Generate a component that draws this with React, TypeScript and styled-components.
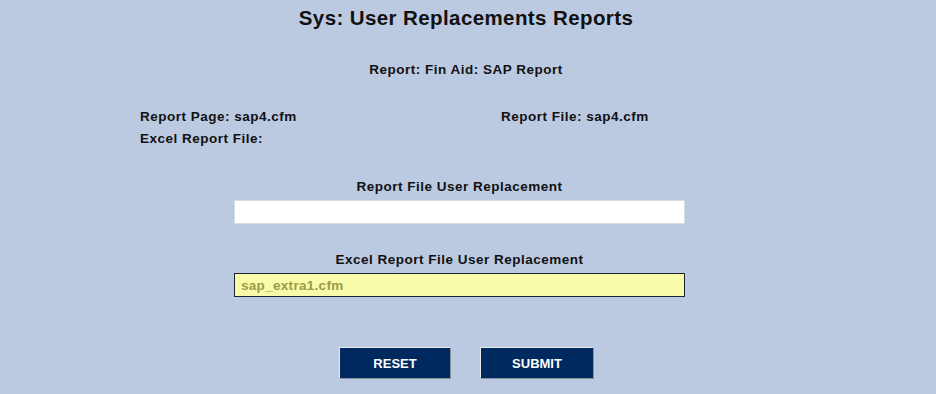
import React from 'react';
import styled, { createGlobalStyle } from 'styled-components';

const GlobalStyle = createGlobalStyle`
  html, body {
    margin: 0;
    padding: 0;
    background: #bccae1;
  }
  body {
    font-family: "Liberation Sans", Arial, sans-serif;
    color: #111;
  }
`;

const Page = styled.div`
  width: 936px;
  height: 394px;
  background: #bccae1;
  display: flex;
  flex-direction: column;
  align-items: flex-start;
`;

const Section = styled.div<{ w: number }>`
  width: ${props => props.w}px;
  display: flex;
  flex-direction: column;
  align-items: center;
`;

const Title = styled.h1`
  margin: 6px 0 0;
  font-size: 20.5px;
  letter-spacing: 0.4px;
  line-height: 24px;
  font-weight: bold;
  text-align: center;
`;

const Label = styled.div<{ top: number }>`
  margin-top: ${props => props.top}px;
  font-size: 13.5px;
  letter-spacing: 0.5px;
  line-height: 16px;
  font-weight: bold;
  text-align: center;
`;

const InfoGrid = styled.div`
  margin: 31px 0 0 140px;
  display: grid;
  grid-template-columns: 361px auto;
  row-gap: 6px;
  font-size: 13.5px;
  letter-spacing: 0.5px;
  line-height: 16px;
  font-weight: bold;
`;

const Field = styled.input<{ filled?: boolean }>`
  box-sizing: border-box;
  width: 451px;
  height: 24px;
  margin-top: 5px;
  padding: 0 6px;
  font-family: "Liberation Sans", Arial, sans-serif;
  font-size: 13.5px;
  letter-spacing: 0.3px;
  font-weight: bold;
  color: #9c9c46;
  background: ${props => (props.filled ? '#f8fba8' : '#ffffff')};
  border: 1px solid ${props => (props.filled ? '#1c2236' : '#d8dce4')};
  outline: none;
`;

const Buttons = styled.div`
  margin-top: 50px;
  display: flex;
  gap: 29px;
`;

const Button = styled.button<{ w: number }>`
  box-sizing: border-box;
  width: ${props => props.w}px;
  height: 32px;
  background: #002a5f;
  color: #ffffff;
  font-family: "Liberation Sans", Arial, sans-serif;
  font-size: 13px;
  font-weight: bold;
  border: 1px solid;
  border-color: #e4e8ee #8b93a3 #8b93a3 #e4e8ee;
  padding: 0;
  cursor: pointer;
`;

const App: React.FC = () => (
  <Page>
    <GlobalStyle />
    <Section w={932}>
      <Title>Sys: User Replacements Reports</Title>
      <Label top={32}>Report: Fin Aid: SAP Report</Label>
    </Section>
    <InfoGrid>
      <span>Report Page: sap4.cfm</span>
      <span>Report File: sap4.cfm</span>
      <span>Excel Report File:</span>
      <span />
    </InfoGrid>
    <Section w={919}>
      <Label top={32}>Report File User Replacement</Label>
      <Field type="text" defaultValue="" />
      <Label top={28}>Excel Report File User Replacement</Label>
      <Field type="text" filled defaultValue="sap_extra1.cfm" />
    </Section>
    <Section w={933}>
      <Buttons>
        <Button w={112} type="reset">RESET</Button>
        <Button w={114} type="submit">SUBMIT</Button>
      </Buttons>
    </Section>
  </Page>
);

export default App;
